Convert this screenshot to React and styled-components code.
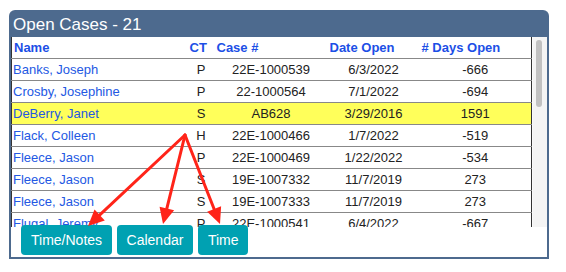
import React from "react";
import styled, { createGlobalStyle } from "styled-components";

const Global = createGlobalStyle`
  html, body { margin: 0; padding: 0; background: #fff; }
  body { font-family: "Liberation Sans", Arial, sans-serif; }
`;

const Page = styled.div`
  position: relative;
  width: 566px;
  height: 272px;
  padding: 10px 0 0 9px;
  box-sizing: border-box;
`;

const Panel = styled.section`
  width: 540px;
  box-sizing: border-box;
  background: #4d6a8e;
  border-radius: 6px 6px 0 0;
  padding: 0 2px 2px 2px;
`;

const PanelTitle = styled.h2`
  margin: 0;
  height: 27px;
  line-height: 29px;
  padding-left: 2px;
  color: #fff;
  font-size: 17px;
  font-weight: normal;
`;

const PanelBody = styled.div`
  background: #fff;
  height: 220px;
  display: flex;
  flex-direction: column;
`;

const ScrollArea = styled.div`
  height: 190px;
  flex: none;
  display: flex;
`;

const Scroller = styled.div`
  flex: 1;
  overflow: hidden;
`;

const ScrollTrack = styled.div`
  width: 15px;
  flex: none;
  box-sizing: border-box;
  background: #f4f4f4;
  border-left: 1px solid #fafafa;
  padding: 3px 5px 0 3px;
`;

const ScrollThumb = styled.div`
  height: 67px;
  border-radius: 3px;
  background: #c1c1c1;
`;

const Table = styled.table`
  width: 100%;
  table-layout: fixed;
  border-collapse: collapse;
  border-left: 1px solid #333;
  border-right: 1px solid #333;
  font-size: 13px;
`;

const Th = styled.th`
  height: 21px;
  padding: 0 2px;
  text-align: left;
  font-weight: bold;
  color: #1c4fe6;
  border-bottom: 1px solid #888;
  white-space: nowrap;
`;

const Tr = styled.tr`
  background: ${(p) => (p.$hl ? "#ffff5a" : "#fff")};
`;

const Td = styled.td`
  height: 21px;
  padding: 0 1px;
  border-bottom: 1px solid #888;
  color: ${(p) => (p.$link ? "#2358e3" : "#222")};
  text-align: ${(p) => (p.$link ? "left" : "center")};
  white-space: nowrap;
  overflow: hidden;
`;

const ButtonBar = styled.div`
  position: relative;
  margin-top: -2px;
  padding-left: 10px;
  display: flex;
  gap: 4.5px;
`;

const Button = styled.button`
  height: 30px;
  padding: 0 10px;
  border: none;
  border-radius: 4px;
  background: #00a1b2;
  color: #fff;
  font-family: "Liberation Sans", Arial, sans-serif;
  font-size: 14px;
  cursor: pointer;
`;

const Overlay = styled.svg`
  position: absolute;
  left: 0;
  top: 0;
  pointer-events: none;
`;

const rows = [
  ["Banks, Joseph", "P", "22E-1000539", "6/3/2022", "-666"],
  ["Crosby, Josephine", "P", "22-1000564", "7/1/2022", "-694"],
  ["DeBerry, Janet", "S", "AB628", "3/29/2016", "1591", true],
  ["Flack, Colleen", "H", "22E-1000466", "1/7/2022", "-519"],
  ["Fleece, Jason", "P", "22E-1000469", "1/22/2022", "-534"],
  ["Fleece, Jason", "S", "19E-1007332", "11/7/2019", "273"],
  ["Fleece, Jason", "S", "19E-1007333", "11/7/2019", "273"],
  ["Flugal, Jeremy", "P", "22E-1000541", "6/4/2022", "-667"],
  ["Garner, Paul", "P", "21E-1004412", "3/15/2021", "-221"],
  ["Hale, Monica", "S", "20E-1002218", "8/12/2020", "-4"],
  ["Hughes, Daniel", "P", "22E-1000602", "7/20/2022", "-713"],
  ["Jensen, Karen", "H", "21-1003377", "5/2/2021", "-269"],
  ["Kline, Robert", "P", "22E-1000488", "2/9/2022", "-552"],
  ["Lopez, Maria", "S", "19E-1007410", "12/3/2019", "247"],
  ["Miller, Thomas", "P", "22E-1000517", "4/18/2022", "-620"],
  ["Nash, Andrea", "P", "21E-1005120", "9/30/2021", "-420"],
  ["Owens, Brian", "H", "20-1001984", "6/22/2020", "48"],
  ["Parker, Linda", "S", "AB702", "1/11/2017", "1303"],
  ["Reed, Steven", "P", "22E-1000575", "6/14/2022", "-677"],
  ["Shaw, Emily", "P", "21E-1005301", "10/26/2021", "-446"],
  ["Tate, Gregory", "S", "20E-1002390", "9/1/2020", "-24"],
];

const origin = [185, 135];
const tips = [
  [88, 226],
  [163, 224],
  [220, 224],
];

function Arrow({ tip }) {
  const [ox, oy] = origin;
  const [tx, ty] = tip;
  const dx = tx - ox;
  const dy = ty - oy;
  const len = Math.hypot(dx, dy);
  const ux = dx / len;
  const uy = dy / len;
  const hl = 16;
  const hw = 7.5;
  const bx = tx - ux * hl;
  const by = ty - uy * hl;
  const px = -uy;
  const py = ux;
  const pts = `${tx},${ty} ${bx + px * hw},${by + py * hw} ${bx - px * hw},${by - py * hw}`;
  return (
    <g>
      <line x1={ox} y1={oy} x2={bx + ux * 2} y2={by + uy * 2} stroke="#ff2419" strokeWidth="3" strokeLinecap="round" />
      <polygon points={pts} fill="#ff2419" />
    </g>
  );
}

export default function App() {
  return (
    <Page>
      <Global />
      <Panel>
        <PanelTitle>Open Cases - 21</PanelTitle>
        <PanelBody>
          <ScrollArea>
            <Scroller>
              <Table>
                <colgroup>
                  <col style={{ width: 176 }} />
                  <col style={{ width: 27 }} />
                  <col style={{ width: 113 }} />
                  <col style={{ width: 92 }} />
                  <col />
                </colgroup>
                <thead>
                  <tr>
                    <Th>Name</Th>
                    <Th>CT</Th>
                    <Th>Case #</Th>
                    <Th>Date Open</Th>
                    <Th># Days Open</Th>
                  </tr>
                </thead>
                <tbody>
                  {rows.map((r, i) => (
                    <Tr key={i} $hl={r[5]}>
                      <Td $link>{r[0]}</Td>
                      <Td>{r[1]}</Td>
                      <Td>{r[2]}</Td>
                      <Td>{r[3]}</Td>
                      <Td>{r[4]}</Td>
                    </Tr>
                  ))}
                </tbody>
              </Table>
            </Scroller>
            <ScrollTrack>
              <ScrollThumb />
            </ScrollTrack>
          </ScrollArea>
          <ButtonBar>
            <Button>Time/Notes</Button>
            <Button>Calendar</Button>
            <Button>Time</Button>
          </ButtonBar>
        </PanelBody>
      </Panel>
      <Overlay width="566" height="272" viewBox="0 0 566 272">
        {tips.map((t, i) => (
          <Arrow key={i} tip={t} />
        ))}
      </Overlay>
    </Page>
  );
}
